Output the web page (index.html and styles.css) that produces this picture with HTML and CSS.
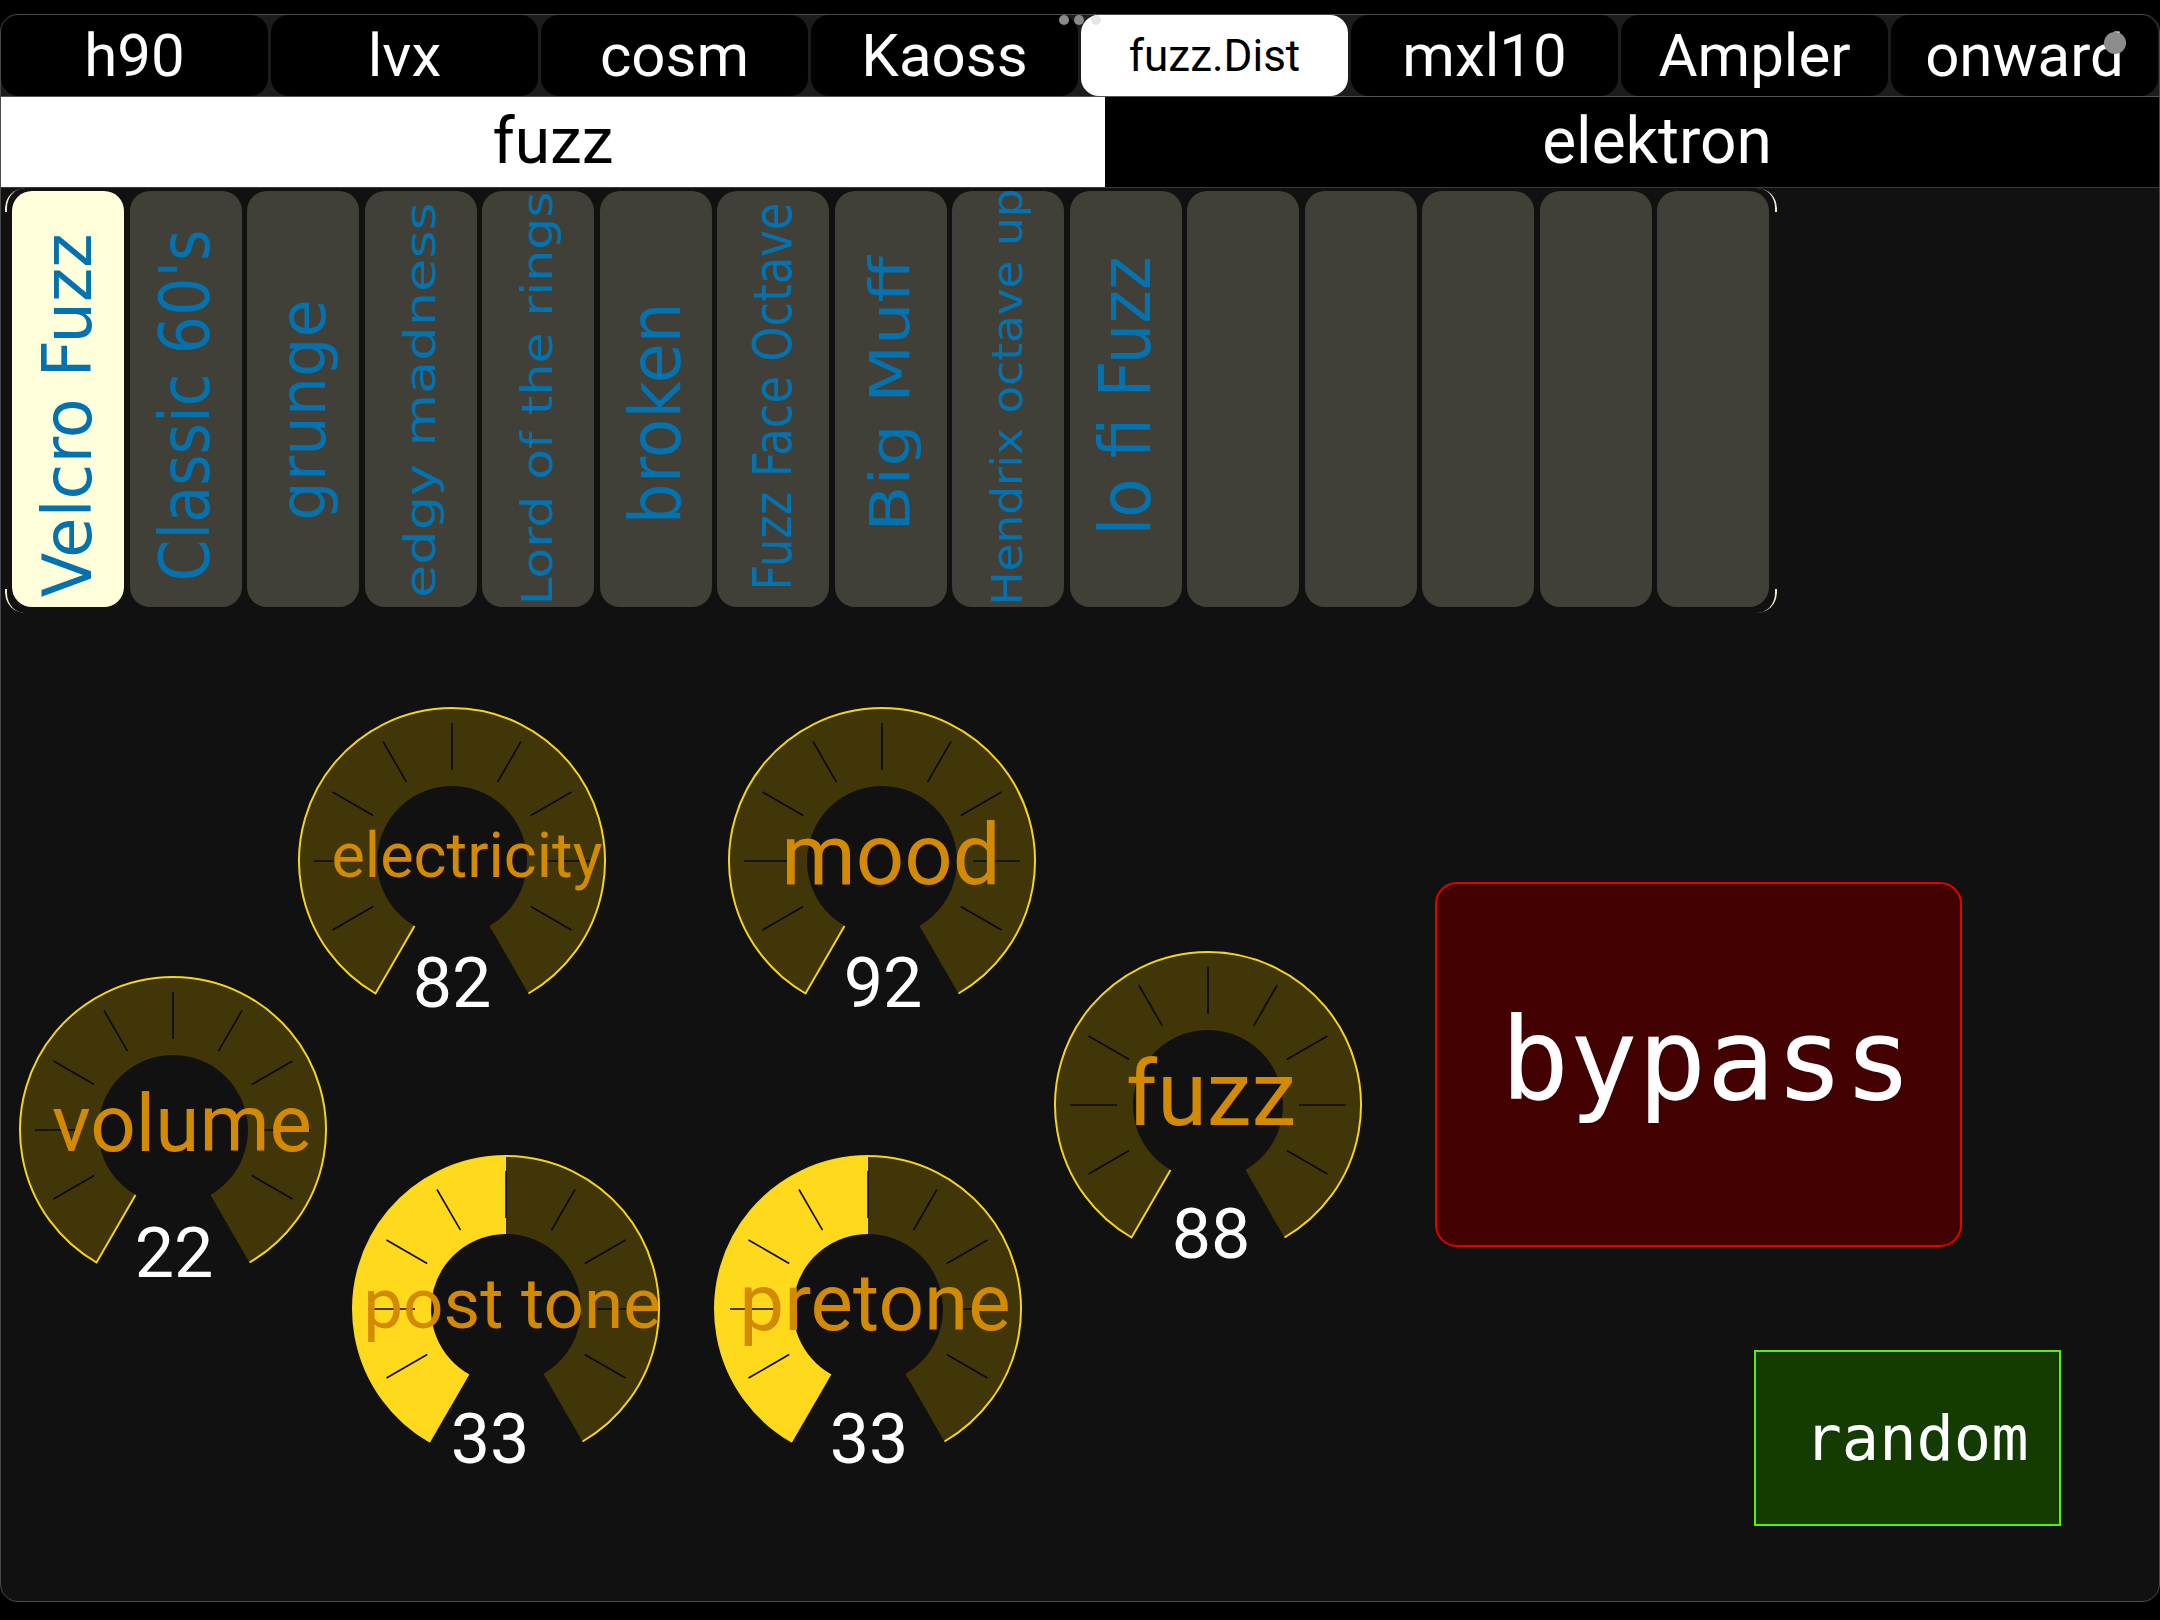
FILE: index.html
```html
<!DOCTYPE html>
<html>
<head>
<meta charset="utf-8">
<title>fuzz.Dist</title>
<link rel="stylesheet" href="styles.css">
</head>
<body>
<svg class="defs" width="0" height="0" aria-hidden="true">
  <defs>
    <g id="ring">
      <path d="M78.5 287.5 A153 153 0 1 1 231.5 287.5 L192.5 220 A75 75 0 1 0 117.5 220 Z" fill="#403608"/>
      <path d="M117.5 220 L78.5 287.5 A153 153 0 1 1 231.5 287.5" fill="none" stroke="#f3d41e" stroke-width="2"/>
    </g>
    <path id="half" d="M78.5 287.5 A153 153 0 0 1 155 2 L155 80 A75 75 0 0 0 117.5 220 Z" fill="#ffd91c"/>
    <g id="ticks" stroke="#0a0a0a" stroke-width="1.6">
      <line x1="155" y1="64" x2="155" y2="17"/>
      <line x1="200.5" y1="76.2" x2="224" y2="35.5"/>
      <line x1="233.8" y1="109.5" x2="274.5" y2="86"/>
      <line x1="246" y1="155" x2="293" y2="155"/>
      <line x1="233.8" y1="200.5" x2="274.5" y2="224"/>
      <line x1="109.5" y1="76.2" x2="86" y2="35.5"/>
      <line x1="76.2" y1="109.5" x2="35.5" y2="86"/>
      <line x1="64" y1="155" x2="17" y2="155"/>
      <line x1="76.2" y1="200.5" x2="35.5" y2="224"/>
    </g>
  </defs>
</svg>

<div class="app">
  <nav class="tabs">
    <div class="tab">h90</div>
    <div class="tab">lvx</div>
    <div class="tab">cosm</div>
    <div class="tab">Kaoss</div>
    <div class="tab active">fuzz.Dist</div>
    <div class="tab">mxl10</div>
    <div class="tab">Ampler</div>
    <div class="tab">onward</div>
  </nav>

  <div class="segs">
    <div class="seg on">fuzz</div>
    <div class="seg">elektron</div>
  </div>

  <div class="presets">
    <div class="strip">
      <div class="card sel"><span style="--fs:68px;--k:.96;--dy:16px">Velcro Fuzz</span></div>
      <div class="card"><span style="--fs:70px;--k:.86;--dy:7px">Classic 60's</span></div>
      <div class="card"><span style="--fs:64px;--k:.97;--dy:11px">grunge</span></div>
      <div class="card"><span style="--fs:43px;--k:1.26;--dy:1px">edgy madness</span></div>
      <div class="card"><span style="--fs:42px;--k:1.2;--dy:0px">Lord of the rings</span></div>
      <div class="card"><span style="--fs:72px;--k:.9;--dy:14px">broken</span></div>
      <div class="card"><span style="--fs:54px;--k:.83;--dy:-2px">Fuzz Face Octave</span></div>
      <div class="card"><span style="--fs:55px;--k:1.22;--dy:-5px">Big Muff</span></div>
      <div class="card"><span style="--fs:42px;--k:1.08;--dy:-2px">Hendrix octave up</span></div>
      <div class="card"><span style="--fs:72px;--k:.89;--dy:-3px">lo fi Fuzz</span></div>
      <div class="card"></div>
      <div class="card"></div>
      <div class="card"></div>
      <div class="card"></div>
      <div class="card"></div>
    </div>
  </div>

  <div class="stage">
    <div class="knob k-elec">
      <svg viewBox="0 0 310 310"><use href="#ring"/><use href="#ticks"/></svg>
      <div class="label">electricity</div>
      <div class="val">82</div>
    </div>
    <div class="knob k-mood">
      <svg viewBox="0 0 310 310"><use href="#ring"/><use href="#ticks"/></svg>
      <div class="label">mood</div>
      <div class="val">92</div>
    </div>
    <div class="knob k-vol">
      <svg viewBox="0 0 310 310"><use href="#ring"/><use href="#ticks"/></svg>
      <div class="label">volume</div>
      <div class="val">22</div>
    </div>
    <div class="knob k-fuzz">
      <svg viewBox="0 0 310 310"><use href="#ring"/><use href="#ticks"/></svg>
      <div class="label">fuzz</div>
      <div class="val">88</div>
    </div>
    <div class="knob k-post">
      <svg viewBox="0 0 310 310"><use href="#ring"/><use href="#half"/><use href="#ticks"/></svg>
      <div class="label">post tone</div>
      <div class="val">33</div>
    </div>
    <div class="knob k-pre">
      <svg viewBox="0 0 310 310"><use href="#ring"/><use href="#half"/><use href="#ticks"/></svg>
      <div class="label">pretone</div>
      <div class="val">33</div>
    </div>

    <div class="bypass">bypass</div>
    <div class="random">random</div>
  </div>

  <i class="dot d1"></i>
  <i class="dot d2"></i>
  <i class="dot d3"></i>
  <i class="thumb"></i>
</div>
</body>
</html>
```

FILE: styles.css
```css
html, body {
  margin: 0;
  padding: 0;
}
body {
  background: #000;
  width: 2160px;
  height: 1620px;
  overflow: hidden;
}
.defs {
  position: absolute;
  width: 0;
  height: 0;
}

.app {
  box-sizing: border-box;
  margin-top: 14px;
  width: 2160px;
  height: 1588px;
  border: 1px solid #4a4a4a;
  border-radius: 18px;
  background: #111;
  overflow: hidden;
  position: relative;
  display: flex;
  flex-direction: column;
  font-family: Roboto, "Open Sans", sans-serif;
}

/* top tabs */
.tabs {
  flex: none;
  display: flex;
  gap: 3px;
  height: 81px;
  background: #1c1c1c;
}
.tab {
  flex: 0 0 267px;
  border-radius: 18px;
  background: #000;
  color: #fff;
  font-size: 60px;
  line-height: 1;
  display: flex;
  align-items: center;
  justify-content: center;
}
.tab.active {
  background: #fff;
  color: #000;
  font-size: 44px;
}

/* segmented row */
.segs {
  flex: none;
  display: flex;
  height: 90px;
  border-top: 1px solid #555;
  border-bottom: 1px solid #3a3a3a;
  overflow: hidden;
}
.seg {
  flex: 0 0 1104px;
  display: flex;
  align-items: center;
  justify-content: center;
  font-size: 64px;
  line-height: 1;
  background: #000;
  color: #fff;
}
.seg.on {
  background: #fff;
  color: #000;
}

/* preset strip */
.presets {
  flex: none;
  height: 424px;
  box-sizing: border-box;
  padding-left: 4px;
}
.strip {
  position: relative;
  width: 1772px;
  height: 424px;
  box-sizing: border-box;
  padding: 3px 0 0 7px;
  display: flex;
  align-items: flex-start;
  gap: 5.5px;
}
.strip::before {
  content: "";
  position: absolute;
  left: 0;
  top: 0;
  right: 0;
  bottom: -1px;
  border-left: 2px solid #f3ecc8;
  border-right: 2px solid #f3ecc8;
  border-radius: 20px;
  -webkit-mask-image: linear-gradient(#000 0 24px, transparent 24px calc(100% - 24px), #000 calc(100% - 24px));
  mask-image: linear-gradient(#000 0 24px, transparent 24px calc(100% - 24px), #000 calc(100% - 24px));
  pointer-events: none;
}
.card {
  flex: 0 0 112px;
  height: 416px;
  border-radius: 20px;
  background: #414038;
  display: flex;
  align-items: center;
  justify-content: center;
}
.card.sel {
  background: #ffffdc;
}
.card span {
  position: relative;
  top: var(--dy, 0px);
  writing-mode: vertical-rl;
  transform: rotate(180deg) scaleY(var(--k, 1));
  font-family: "DejaVu Sans", Verdana, sans-serif;
  font-size: var(--fs);
  line-height: 1.1;
  color: #0472ae;
  white-space: nowrap;
}

/* knob stage */
.stage {
  position: relative;
  flex: 1;
}
.knob {
  position: absolute;
  width: 310px;
  height: 310px;
}
.knob svg {
  display: block;
  width: 310px;
  height: 310px;
  overflow: visible;
}
.label {
  position: absolute;
  left: -120px;
  right: -120px;
  top: 155px;
  text-align: center;
  line-height: 1;
  white-space: nowrap;
  color: #d48a00;
  font-size: var(--ls);
  transform: translate(var(--dx, 0px), -50%);
  margin-top: var(--dy, -6px);
}
.val {
  position: absolute;
  left: -40px;
  right: -40px;
  top: var(--vt, 242px);
  text-align: center;
  line-height: 1;
  color: #fff;
  font-size: 70px;
  transform: translateX(var(--vx, 0px));
}

.k-elec { left: 296px; top: 94px;  --ls: 63px; --dx: 15px; --vt: 242px; }
.k-mood { left: 726px; top: 94px;  --ls: 85px; --dx: 9px;  --vt: 242px; --vx: 1px; }
.k-vol  { left: 17px;  top: 363px; --ls: 80px; --dx: 9px;  --vt: 243px; --vx: 1px; }
.k-fuzz { left: 1052px; top: 338px; --ls: 90px; --dx: 3px; --dy: -10px; --vt: 249px; --vx: 3px; }
.k-post { left: 350px; top: 542px; --ls: 71px; --dx: 6px;  --vt: 250px; --vx: -16px; }
.k-pre  { left: 712px; top: 542px; --ls: 80px; --dx: 7px;  --vt: 250px; --vx: 1px; }

/* buttons */
.bypass {
  position: absolute;
  left: 1434px;
  top: 270px;
  width: 527px;
  height: 365px;
  box-sizing: border-box;
  border: 2px solid #e60000;
  border-radius: 22px;
  background: #420000;
  color: #fff;
  font-family: "DejaVu Sans Mono", monospace;
  font-size: 114px;
  display: flex;
  align-items: center;
  justify-content: center;
  padding: 0 0 10px 16px;
}
.random {
  position: absolute;
  left: 1753px;
  top: 738px;
  width: 307px;
  height: 176px;
  box-sizing: border-box;
  border: 2px solid #5cf000;
  background: #153c00;
  color: #fff;
  font-family: "DejaVu Sans Mono", monospace;
  font-size: 62px;
  display: flex;
  align-items: center;
  justify-content: center;
  padding-left: 18px;
}

/* overlays */
.dot {
  position: absolute;
  top: 0;
  width: 10px;
  height: 10px;
  border-radius: 50%;
  background: #8a8a8a;
}
.d1 { left: 1058px; }
.d2 { left: 1073px; }
.d3 { left: 1090px; background: #e4e4e4; }
.thumb {
  position: absolute;
  left: 2103px;
  top: 17px;
  width: 22px;
  height: 22px;
  border-radius: 50%;
  background: #8c8c8c;
}
```
